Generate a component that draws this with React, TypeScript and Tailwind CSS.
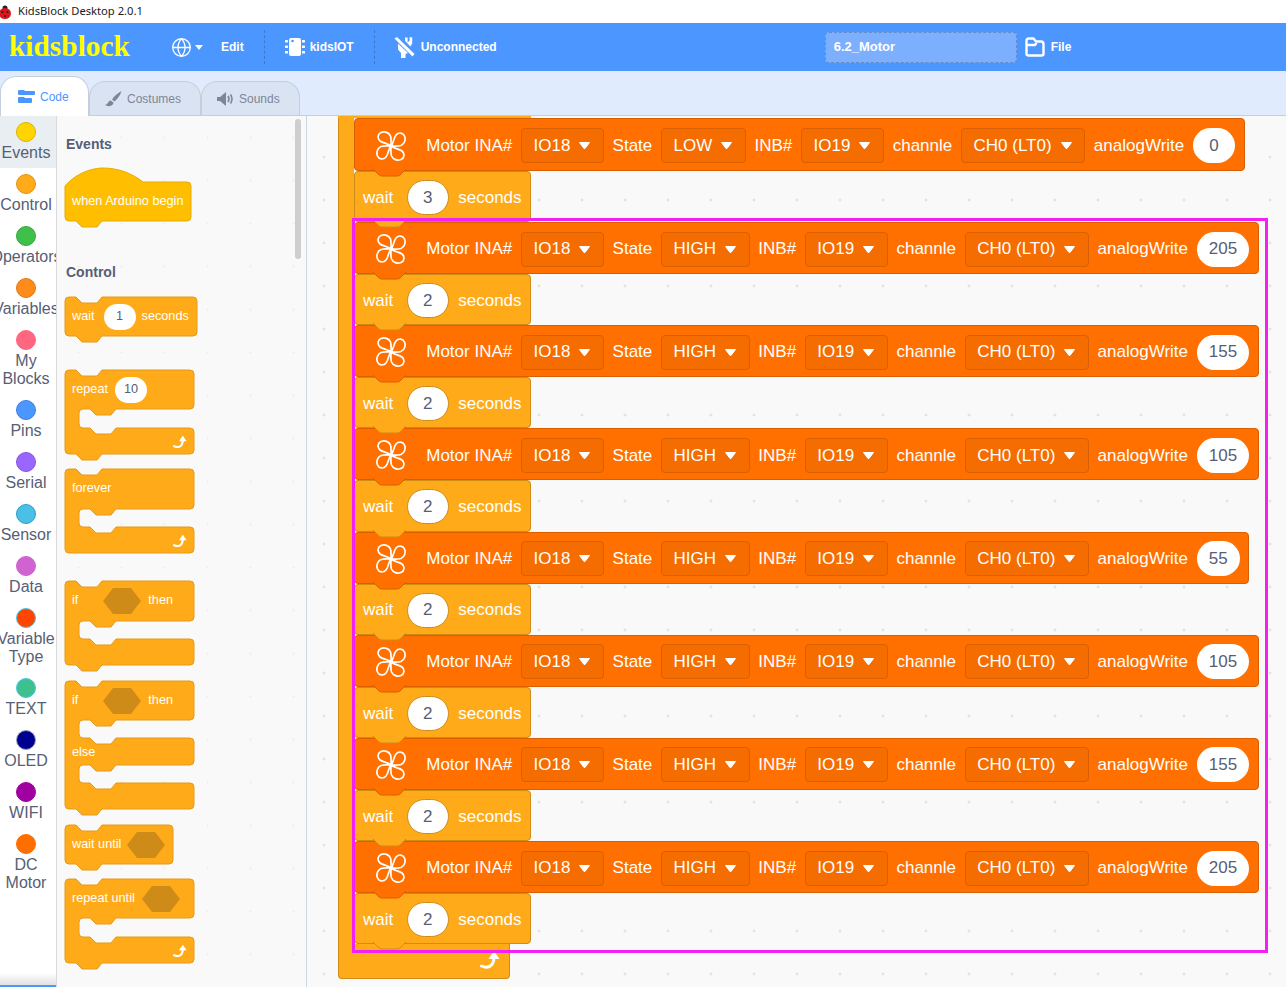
import type { ReactNode } from "react";
import { Globe } from "lucide-react";

const categories = [
  { label: "Events", color: "bg-[#ffd500]", ring: "border-[#d9b300]", height: "h-[52px]", active: true },
  { label: "Control", color: "bg-[#ffab19]", ring: "border-[#e09416]", height: "h-[52px]" },
  { label: "Operators", color: "bg-[#40bf4a]", ring: "border-[#38a840]", height: "h-[52px]" },
  { label: "Variables", color: "bg-[#ff8c1a]", ring: "border-[#db7a17]", height: "h-[52px]" },
  { label: "My Blocks", color: "bg-[#ff6680]", ring: "border-[#ff6680]", height: "h-[70px]" },
  { label: "Pins", color: "bg-[#4c97ff]", ring: "border-[#3d80e0]", height: "h-[52px]" },
  { label: "Serial", color: "bg-[#9966ff]", ring: "border-[#8555e0]", height: "h-[52px]" },
  { label: "Sensor", color: "bg-[#4cbfe6]", ring: "border-[#2e9fc4]", height: "h-[52px]" },
  { label: "Data", color: "bg-[#cf63cf]", ring: "border-[#cf63cf]", height: "h-[52px]" },
  { label: "Variable Type", color: "bg-[#ff4500]", ring: "border-[#4cc4e6]", height: "h-[70px]" },
  { label: "TEXT", color: "bg-[#3fc08f]", ring: "border-[#4cc4e6]", height: "h-[52px]" },
  { label: "OLED", color: "bg-[#000090]", ring: "border-[#9aa0c0]", height: "h-[52px]" },
  { label: "WIFI", color: "bg-[#a000a0]", ring: "border-[#a000a0]", height: "h-[52px]" },
  { label: "DC Motor", color: "bg-[#ff6f00]", ring: "border-[#ff6f00]", height: "h-[70px]" },
];

const motorRows = [
  { state: "HIGH", speed: "205", secs: "2" },
  { state: "HIGH", speed: "155", secs: "2" },
  { state: "HIGH", speed: "105", secs: "2" },
  { state: "HIGH", speed: "55", secs: "2" },
  { state: "HIGH", speed: "105", secs: "2" },
  { state: "HIGH", speed: "155", secs: "2" },
  { state: "HIGH", speed: "205", secs: "2" },
];

// block outline used by the palette: top notch, optional C mouths, optional bottom tab
function blockPath(w: number, h: number, mouths: [number, number][] = [], tab = true) {
  const r = 4;
  let d = `M0 ${r} Q0 0 ${r} 0 L11 0 L17 6 L32 6 L37 0 L${w - r} 0 Q${w} 0 ${w} ${r} `;
  for (const [a, b] of mouths) {
    d += `L${w} ${a - r} Q${w} ${a} ${w - r} ${a} L51 ${a} L46 ${a + 6} L31 ${a + 6} L25 ${a} L18 ${a} Q14 ${a} 14 ${a + r} `;
    d += `L14 ${b - r} Q14 ${b} 18 ${b} L25 ${b} L31 ${b + 6} L46 ${b + 6} L51 ${b} L${w - r} ${b} Q${w} ${b} ${w} ${b + r} `;
  }
  d += `L${w} ${h - r} Q${w} ${h} ${w - r} ${h} `;
  if (tab) d += `L37 ${h} L32 ${h + 6} L17 ${h + 6} L11 ${h} `;
  d += `L${r} ${h} Q0 ${h} 0 ${h - r} Z`;
  return d;
}

function BlockShape({ w, h, mouths, tab }: { w: number; h: number; mouths?: [number, number][]; tab?: boolean }) {
  return (
    <svg width={w} height={h + 7} className="absolute left-0 top-0 overflow-visible">
      <path d={blockPath(w, h, mouths, tab)} fill="#ffab19" stroke="#e69a17" strokeWidth="1" />
    </svg>
  );
}

function Hexagon({ className = "" }: { className?: string }) {
  return (
    <svg width="38" height="26" viewBox="0 0 38 26" className={className}>
      <polygon points="0,13 10,0 28,0 38,13 28,26 10,26" fill="#cf8b17" />
    </svg>
  );
}

function LoopArrow({ size = 14 }: { size?: number }) {
  return (
    <svg width={size} height={size} viewBox="0 0 20 20" fill="none">
      <path d="M1.5 16 C8 19 13.5 16 14 8" stroke="#fff" strokeWidth="3" strokeLinecap="round" />
      <polygon points="14,1 8.5,9 19.5,9" fill="#fff" />
    </svg>
  );
}

function MiniPill({ value }: { value: string }) {
  return (
    <span className="flex h-[26px] w-[32px] items-center justify-center rounded-full bg-white text-[#575e75]">{value}</span>
  );
}

function BlockRow({ children, height = "h-[40px]" }: { children: ReactNode; height?: string }) {
  return <div className={`relative flex items-center pl-[7px] text-[12.7px] text-white ${height}`}>{children}</div>;
}

function Palette() {
  return (
    <div className="relative flex w-[250px] shrink-0 flex-col overflow-hidden border-r border-[#ccd5e0] bg-[#f9f9f9] bg-[radial-gradient(circle,#f0f0f0_1px,transparent_1.2px)] bg-[length:43px_43px] pl-[8px]">
      <h2 className="mt-[19px] h-[18px] pl-[1px] text-[14px] leading-[18px] font-bold text-[#575e75]">Events</h2>
      <div className="relative mt-[15px] h-[53px] w-[126px]">
        <svg width="126" height="60" className="absolute left-0 top-0 overflow-visible">
          <path
            d="M0 18 C10 6 26 0 38 0 C54 0 68 6 78 14 L122 14 Q126 14 126 18 L126 49 Q126 53 122 53 L37 53 L32 59 L17 59 L11 53 L4 53 Q0 53 0 49 Z"
            fill="#ffbf00"
            stroke="#e6ac00"
          />
        </svg>
        <span className="absolute left-[7px] top-[25px] text-[12.7px] leading-[16px] whitespace-nowrap text-white">when Arduino begin</span>
      </div>

      <h2 className="mt-[42px] h-[18px] pl-[1px] text-[14px] leading-[18px] font-bold text-[#575e75]">Control</h2>
      <div className="relative mt-[16px] h-[39px] w-[132px]">
        <BlockShape w={132} h={39} tab />
        <BlockRow>
          <span>wait</span>
          <span className="ml-[9px]"><MiniPill value="1" /></span>
          <span className="ml-[6px]">seconds</span>
        </BlockRow>
      </div>

      <div className="relative mt-[34px] h-[84px] w-[129px]">
        <BlockShape w={129} h={84} mouths={[[39, 58]]} tab />
        <BlockRow>
          <span>repeat</span>
          <span className="ml-[7px]"><MiniPill value="10" /></span>
        </BlockRow>
        <span className="absolute right-[7px] bottom-[5px]"><LoopArrow /></span>
      </div>

      <div className="relative mt-[15px] h-[84px] w-[129px]">
        <BlockShape w={129} h={84} mouths={[[40, 58]]} tab={false} />
        <BlockRow>forever</BlockRow>
        <span className="absolute right-[7px] bottom-[5px]"><LoopArrow /></span>
      </div>

      <div className="relative mt-[28px] h-[84px] w-[129px]">
        <BlockShape w={129} h={84} mouths={[[40, 58]]} tab />
        <BlockRow>
          <span>if</span>
          <Hexagon className="ml-[25px]" />
          <span className="ml-[7px]">then</span>
        </BlockRow>
      </div>

      <div className="relative mt-[16px] h-[128px] w-[129px]">
        <BlockShape w={129} h={128} mouths={[[39, 57], [84, 102]]} tab />
        <BlockRow height="h-[39px]">
          <span>if</span>
          <Hexagon className="ml-[25px]" />
          <span className="ml-[7px]">then</span>
        </BlockRow>
        <span className="absolute left-[7px] top-[63px] text-[12.7px] leading-[16px] text-white">else</span>
      </div>

      <div className="relative mt-[16px] h-[39px] w-[108px]">
        <BlockShape w={108} h={39} tab />
        <BlockRow height="h-[39px]">
          <span>wait until</span>
          <Hexagon className="ml-[6px]" />
        </BlockRow>
      </div>

      <div className="relative mt-[15px] h-[84px] w-[129px]">
        <BlockShape w={129} h={84} mouths={[[39, 58]]} tab />
        <BlockRow>
          <span className="whitespace-nowrap">repeat until</span>
          <Hexagon className="ml-[7px]" />
        </BlockRow>
        <span className="absolute right-[7px] bottom-[5px]"><LoopArrow /></span>
      </div>

      {/* scrollbar */}
      <div className="absolute left-[238px] top-[3px] h-[140px] w-[6px] rounded-full bg-[#cecece]" />
    </div>
  );
}

function Sidebar() {
  return (
    <div className="relative w-[57px] shrink-0 overflow-hidden border-r border-[#d9d9d9] bg-white text-[16px] leading-[18px] text-[#575e75]">
      {categories.map((c) => (
        <div key={c.label} className={`${c.height} ${c.active ? "bg-[#e9eef2]" : ""}`}>
          <div className="flex w-[52px] flex-col items-center pt-[6px]">
            <span className={`h-[20px] w-[20px] shrink-0 rounded-full border ${c.color} ${c.ring}`} />
            <span className="mt-[2px] text-center">{c.label}</span>
          </div>
        </div>
      ))}
      <div className="absolute inset-x-0 bottom-0 h-[14px] bg-gradient-to-b from-white to-[#dcdcdc]" />
      <div className="absolute inset-x-0 bottom-0 h-[2px] bg-[#4c97ff]" />
    </div>
  );
}

function Tab({ color, stroke }: { color: string; stroke: string }) {
  return (
    <svg width="51" height="8" viewBox="0 0 51 8" className="absolute left-0 top-[calc(100%-1px)] z-10 overflow-visible">
      <path d="M18 0 L24 6 Q25.5 7 27 7 L42 7 Q43.5 7 45 6 L51 0 Z" fill={color} />
      <path d="M18 0 L24 6 Q25.5 7 27 7 L42 7 Q43.5 7 45 6 L51 0" fill="none" stroke={stroke} />
    </svg>
  );
}

function Dropdown({ label }: { label: string }) {
  return (
    <span className="flex h-[35px] shrink-0 items-center rounded-[4px] border border-[#d95f00] bg-[#f56c00] pr-[12.5px] pl-[11.5px] whitespace-nowrap">
      {label}
      <svg width="11" height="7" viewBox="0 0 11 7" className="ml-[9px]">
        <path d="M0.5 0.5 L10.5 0.5 L6 6.5 L5 6.5 Z" fill="#fff" stroke="#fff" strokeLinejoin="round" />
      </svg>
    </span>
  );
}

function FanIcon() {
  const petal = "M15 15 C13 12.5 7 12.5 4 10 C1 7.5 1.5 3 5 1.5 C8.5 0 13 1.5 14.5 5 C15.5 8 15 12 15 15 Z";
  return (
    <svg width="30" height="30" viewBox="0 0 30 30" fill="none" stroke="#fff" strokeWidth="1.7" className="shrink-0">
      <path d={petal} />
      <path d={petal} transform="rotate(90 15 15)" />
      <path d={petal} transform="rotate(180 15 15)" />
      <path d={petal} transform="rotate(270 15 15)" />
    </svg>
  );
}

function MotorBlock({ state, speed, tall }: { state: string; speed: string; tall?: boolean }) {
  return (
    <div
      className={`relative flex w-fit items-center gap-[8.75px] rounded-[4px] border border-[#d95f00] bg-[#ff7000] pt-[2px] pr-[8.5px] pl-[21px] text-[17px] whitespace-nowrap text-white ${
        tall ? "h-[53px]" : "h-[52px]"
      }`}
    >
      <FanIcon />
      <span className="ml-[11.5px]">Motor INA#</span>
      <Dropdown label="IO18" />
      <span>State</span>
      <Dropdown label={state} />
      <span>INB#</span>
      <Dropdown label="IO19" />
      <span>channle</span>
      <Dropdown label="CH0 (LT0)" />
      <span>analogWrite</span>
      <span className="flex h-[35px] min-w-[42px] items-center justify-center rounded-full bg-white px-[12px] text-[#575e75]">{speed}</span>
      <Tab color="#ff7000" stroke="#d95f00" />
    </div>
  );
}

function WaitBlock({ secs }: { secs: string }) {
  return (
    <div className="relative flex h-[51.2px] w-[177px] items-center rounded-[4px] border border-[#cf8b17] bg-[#ffab19] pt-[2px] pl-[8px] text-[17px] text-white">
      <span>wait</span>
      <span className="ml-[13.5px] flex h-[35px] w-[42px] items-center justify-center rounded-full border border-[#cf8b17] bg-white text-[#575e75]">{secs}</span>
      <span className="ml-[9.5px]">seconds</span>
      <Tab color="#ffab19" stroke="#cf8b17" />
    </div>
  );
}

function Workspace() {
  return (
    <div className="relative flex-1 overflow-hidden bg-[#f9f9f9] bg-[radial-gradient(circle,#dcdcdc_1px,transparent_1.3px)] bg-[length:43px_43px] bg-[position:-4.5px_19.5px] pl-[31px]">
      <div className="flex w-fit flex-col">
        <div className="h-[2px] w-[193px] bg-[#ffab19]" />
        <div className="flex">
          <div className="w-[16px] border-l border-[#cf8b17] bg-[#ffab19]" />
          <div className="flex flex-col items-start">
            <MotorBlock state="LOW" speed="0" tall />
            <div className="[&>div]:h-[51px]">
              <WaitBlock secs="3" />
            </div>
            {motorRows.map((r, i) => (
              <div key={i} className="flex flex-col items-start">
                <MotorBlock state={r.state} speed={r.speed} />
                <WaitBlock secs={r.secs} />
              </div>
            ))}
          </div>
        </div>
        <div className="flex h-[35px] w-[172px] items-end justify-end rounded-b-[4px] border border-t-0 border-[#cf8b17] bg-[#ffab19] pr-[9px] pb-[8px]">
          <LoopArrow size={20} />
        </div>
      </div>
      {/* highlight drawn over the repeated blocks */}
      <div className="pointer-events-none absolute left-[45px] top-[102px] z-20 h-[735px] w-[916px] border-[3px] border-[#f31ff3]" />
    </div>
  );
}

function TabButton({ icon, label, active }: { icon: ReactNode; label: string; active?: boolean }) {
  return (
    <div
      className={`flex items-center self-end rounded-t-[16px] border border-b-0 border-[#c4cedd] text-[12px] ${
        active ? "z-10 -mb-px h-[40px] w-[89px] bg-white pl-[17px] text-[#4c97ff]" : "h-[34px] bg-[#d9e3f2] pt-[1px] pl-[15px] text-[#7d8699]"
      }`}
    >
      {icon}
      <span className="ml-[5px]">{label}</span>
    </div>
  );
}

export default function App() {
  return (
    <div className="flex h-[987px] w-[1286px] flex-col overflow-hidden bg-white font-['Liberation_Sans',Arial,sans-serif]">
      {/* window title bar */}
      <div className="flex h-[23px] shrink-0 items-center bg-white">
        <svg width="12" height="14" viewBox="0 0 12 14" className="mt-[1px] shrink-0">
          <circle cx="5" cy="3" r="2.5" fill="#222" />
          <ellipse cx="5" cy="8.5" rx="6" ry="5.5" fill="#d8161c" />
          <circle cx="2.5" cy="7" r="1" fill="#222" />
          <circle cx="7.5" cy="7" r="1" fill="#222" />
          <circle cx="5" cy="11" r="1" fill="#222" />
        </svg>
        <span className="ml-[6px] font-['Noto_Sans',sans-serif] text-[11.2px] text-[#1a1a1a]">KidsBlock Desktop 2.0.1</span>
      </div>

      {/* menu bar */}
      <div className="flex h-[48px] shrink-0 items-center bg-[#4c97ff] text-[12px] font-bold text-white">
        <span className="ml-[9px] w-[121px] font-['Liberation_Serif',serif] text-[29.4px] leading-none font-bold text-[#ffff00]">kidsblock</span>
        <Globe className="ml-[41px] shrink-0" size={21} strokeWidth={1.5} />
        <svg width="8" height="5" viewBox="0 0 8 5" className="ml-[3px]">
          <path d="M0 0 L8 0 L4 5 Z" fill="#fff" />
        </svg>
        <span className="ml-[18px]">Edit</span>
        <div className="ml-[20px] h-[34px] border-l border-dashed border-black/20" />
        <svg width="20" height="18" viewBox="0 0 20 18" className="ml-[20px]" fill="#fff">
          <rect x="4" y="0" width="12" height="18" rx="2" />
          <circle cx="7.5" cy="3" r="1.3" fill="#4c97ff" />
          <rect x="0" y="2" width="3" height="2.6" rx="0.6" />
          <rect x="0" y="7.5" width="3" height="2.6" rx="0.6" />
          <rect x="0" y="13" width="3" height="2.6" rx="0.6" />
          <rect x="17" y="2" width="3" height="2.6" rx="0.6" />
          <rect x="17" y="7.5" width="3" height="2.6" rx="0.6" />
          <rect x="17" y="13" width="3" height="2.6" rx="0.6" />
        </svg>
        <span className="ml-[5px]">kidsIOT</span>
        <div className="ml-[20px] h-[34px] border-l border-dashed border-black/20" />
        <svg width="21" height="21" viewBox="0 0 21 21" className="ml-[19px]" fill="#fff">
          <path d="M0.5 1.5 L3 0 L20.5 17 L18.5 19.5 Z" />
          <path d="M11 0.5 h2.6 v5 l2 -2 v-3.2 h2.6 v6.2 l-1.8 3 L11 3.8 Z" />
          <path d="M4 6.5 L14 16 L11.5 17 V21 H7 V16 L4 12.5 Z" />
        </svg>
        <span className="ml-[6px]">Unconnected</span>
        <div className="ml-[328px] flex h-[31px] w-[192px] items-center rounded-[4px] border border-dashed border-black/20 bg-[#7cb0ff] pl-[8px] text-[13px]">6.2_Motor</div>
        <svg width="20" height="20" viewBox="0 0 20 20" className="ml-[8px]" fill="none" stroke="#fff" strokeWidth="2.4" strokeLinejoin="round">
          <path d="M1.5 17 V4 Q1.5 1.5 4 1.5 H8.5 L11 4.5 H16 Q18.5 4.5 18.5 7 V17 Q18.5 18.5 16.5 18.5 H3.5 Q1.5 18.5 1.5 17 Z" />
          <path d="M1.5 8 H10 L11.5 6" />
        </svg>
        <span className="ml-[6px]">File</span>
      </div>

      {/* tabs */}
      <div className="flex h-[45px] shrink-0 border-b border-[#c4cedd] bg-[#e0ecfd]">
        <TabButton
          active
          label="Code"
          icon={
            <svg width="17" height="13" viewBox="0 0 17 13" fill="#4c97ff">
              <path d="M1 0 H6 L7 1 H16 Q17 1 17 2 V4 Q17 5 16 5 H1 Q0 5 0 4 V1 Q0 0 1 0 Z" />
              <path d="M1 7 H6 L7 8 H13 Q14 8 14 9 V12 Q14 13 13 13 H1 Q0 13 0 12 V8 Q0 7 1 7 Z" />
            </svg>
          }
        />
        <div className="w-[112px] self-end">
          <TabButton
            label="Costumes"
            icon={
              <svg width="17" height="16" viewBox="0 0 17 16" fill="#7d8699">
                <path d="M16.5 0 C13 2 9 5 7 8.5 L9.5 10.5 C12.5 8 15.5 4 16.5 0 Z" />
                <path d="M5.5 9.5 C3 10 3.5 13 0 14 C3 16 8 15.5 8.5 11.5 Z" />
              </svg>
            }
          />
        </div>
        <div className="w-[99px] self-end">
          <TabButton
            label="Sounds"
            icon={
              <svg width="17" height="14" viewBox="0 0 17 14" fill="#7d8699">
                <path d="M0 5 H3 L9 0 V14 L3 9 H0 Z" />
                <path d="M11 4 Q13 7 11 10" fill="none" stroke="#7d8699" strokeWidth="1.6" />
                <path d="M13.5 2.5 Q16.5 7 13.5 11.5" fill="none" stroke="#7d8699" strokeWidth="1.6" />
              </svg>
            }
          />
        </div>
      </div>

      <div className="flex min-h-0 flex-1">
        <Sidebar />
        <Palette />
        <Workspace />
      </div>
    </div>
  );
}
